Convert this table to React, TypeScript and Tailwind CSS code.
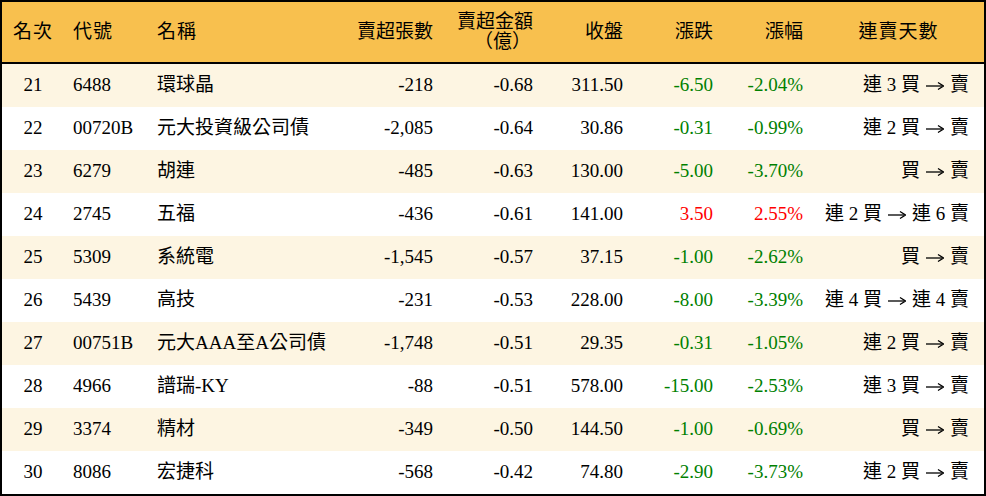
import React from "react";

type Row = {
  rank: number;
  code: string;
  name: string;
  lots: string;
  amount: string;
  close: string;
  change: string;
  pct: string;
  buy: string;
  sell: string;
};

const rows: Row[] = [
  { rank: 21, code: "6488", name: "環球晶", lots: "-218", amount: "-0.68", close: "311.50", change: "-6.50", pct: "-2.04%", buy: "連 3 買", sell: "賣" },
  { rank: 22, code: "00720B", name: "元大投資級公司債", lots: "-2,085", amount: "-0.64", close: "30.86", change: "-0.31", pct: "-0.99%", buy: "連 2 買", sell: "賣" },
  { rank: 23, code: "6279", name: "胡連", lots: "-485", amount: "-0.63", close: "130.00", change: "-5.00", pct: "-3.70%", buy: "買", sell: "賣" },
  { rank: 24, code: "2745", name: "五福", lots: "-436", amount: "-0.61", close: "141.00", change: "3.50", pct: "2.55%", buy: "連 2 買", sell: "連 6 賣" },
  { rank: 25, code: "5309", name: "系統電", lots: "-1,545", amount: "-0.57", close: "37.15", change: "-1.00", pct: "-2.62%", buy: "買", sell: "賣" },
  { rank: 26, code: "5439", name: "高技", lots: "-231", amount: "-0.53", close: "228.00", change: "-8.00", pct: "-3.39%", buy: "連 4 買", sell: "連 4 賣" },
  { rank: 27, code: "00751B", name: "元大AAA至A公司債", lots: "-1,748", amount: "-0.51", close: "29.35", change: "-0.31", pct: "-1.05%", buy: "連 2 買", sell: "賣" },
  { rank: 28, code: "4966", name: "譜瑞-KY", lots: "-88", amount: "-0.51", close: "578.00", change: "-15.00", pct: "-2.53%", buy: "連 3 買", sell: "賣" },
  { rank: 29, code: "3374", name: "精材", lots: "-349", amount: "-0.50", close: "144.50", change: "-1.00", pct: "-0.69%", buy: "買", sell: "賣" },
  { rank: 30, code: "8086", name: "宏捷科", lots: "-568", amount: "-0.42", close: "74.80", change: "-2.90", pct: "-3.73%", buy: "連 2 買", sell: "賣" },
];

const cols = "grid grid-cols-[62px_86px_183px_100px_100px_90px_90px_90px_1fr]";

function Arrow() {
  return (
    <svg width="18" height="10" viewBox="0 0 18 10">
      <path d="M0 5h16" stroke="black" strokeWidth="1.3" />
      <path d="M12 1.5 L17.5 5 L12 8.5" fill="none" stroke="black" strokeWidth="1.3" />
    </svg>
  );
}

export default function App() {
  return (
    <div
      className="w-[986px] h-[496px] border-2 border-black bg-white text-[19px] text-black"
      style={{ fontFamily: '"Liberation Serif", "Noto Sans CJK TC", serif' }}
    >
      <div className={`${cols} h-[62px] border-b-2 border-black bg-[#f8c04e] items-center`}>
        <div className="text-center tracking-[1px]">名次</div>
        <div className="pl-[9px] tracking-[1px]">代號</div>
        <div className="pl-[7px] tracking-[1px]">名稱</div>
        <div className="text-right">賣超張數</div>
        <div className="text-right leading-[20px] pl-[22px]">
          賣超金額
          <br />
          <span className="pr-[2px]">（億）</span>
        </div>
        <div className="text-right">收盤</div>
        <div className="text-right">漲跌</div>
        <div className="text-right">漲幅</div>
        <div className="text-center pl-[10px] tracking-[1px]">連賣天數</div>
      </div>
      {rows.map((r, i) => {
        const up = !r.change.startsWith("-");
        const color = up ? "text-[#ff0000]" : "text-[#008000]";
        return (
          <div
            key={r.rank}
            className={`${cols} h-[43px] items-center ${i % 2 === 0 ? "bg-[#fdf5e2]" : "bg-white"}`}
          >
            <div className="text-center">{r.rank}</div>
            <div className="pl-[9px]">{r.code}</div>
            <div className="pl-[7px] whitespace-nowrap">{r.name}</div>
            <div className="text-right">{r.lots}</div>
            <div className="text-right">{r.amount}</div>
            <div className="text-right">{r.close}</div>
            <div className={`text-right ${color}`}>{r.change}</div>
            <div className={`text-right ${color}`}>{r.pct}</div>
            <div className="flex justify-end items-center gap-[6px] pr-[15px] whitespace-pre">
              <span>{r.buy}</span>
              <Arrow />
              <span>{r.sell}</span>
            </div>
          </div>
        );
      })}
    </div>
  );
}
